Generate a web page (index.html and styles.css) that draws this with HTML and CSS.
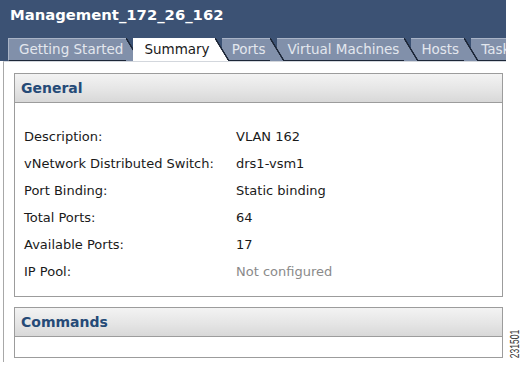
FILE: index.html
```html
<!DOCTYPE html>
<html lang="en">
  <head>
    <meta charset="UTF-8" />
    <title>Management_172_26_162</title>
    <link rel="stylesheet" href="styles.css">
  </head>
  <body>
    <div class="window">
      <div class="header">
        <div class="title">Management_172_26_162</div>
        <div class="tabs">
          <div class="tab">Getting Started</div>
          <div class="tab active">Summary</div>
          <div class="tab">Ports</div>
          <div class="tab">Virtual Machines</div>
          <div class="tab">Hosts</div>
          <div class="tab">Tasks &amp; Events</div>
        </div>
      </div>

      <div class="content">
        <div class="panel">
          <div class="panel-header">General</div>
          <div class="panel-body">
            <div class="row"><span class="label">Description:</span><span class="value">VLAN 162</span></div>
            <div class="row"><span class="label">vNetwork Distributed Switch:</span><span class="value">drs1-vsm1</span></div>
            <div class="row"><span class="label">Port Binding:</span><span class="value">Static binding</span></div>
            <div class="row"><span class="label">Total Ports:</span><span class="value">64</span></div>
            <div class="row"><span class="label">Available Ports:</span><span class="value">17</span></div>
            <div class="row"><span class="label">IP Pool:</span><span class="value muted">Not configured</span></div>
          </div>
        </div>

        <!-- Commands -->
        <div class="panel commands">
          <div class="panel-header">Commands</div>
          <div class="panel-body"></div>
        </div>
      </div>
    </div>

    <div class="figure-id">231501</div>
  </body>
</html>
```

FILE: styles.css
```css
* {
  margin: 0;
  padding: 0;
  box-sizing: border-box;
}

body {
  width: 521px;
  height: 368px;
  background: #fff;
  font-family: 'DejaVu Sans', Verdana, sans-serif;
  font-size: 13px;
  color: #1a1a1a;
  position: relative;
  overflow: hidden;
}

.window {
  width: 506px;
}

.header {
  height: 61px;
  background: #3c5274;
  display: flex;
  flex-direction: column;
  justify-content: space-between;
  overflow: hidden;
}

.title {
  padding: 6px 0 0 10px;
  font-weight: bold;
  font-size: 14.8px;
  line-height: 18px;
  color: #fff;
}

.tabs {
  display: flex;
  padding-left: 8px;
}

.tab {
  position: relative;
  flex-shrink: 0;
  height: 23px;
  line-height: 21px;
  padding: 0 5px 0 10px;
  margin-right: 7px;
  font-size: 13.5px;
  color: #e3e7ee;
  background: #8190aa;
  border-top: 1px solid #a9b4c7;
  border-bottom: 1px solid #1d2738;
}

.tab:first-child {
  border-left: 1px solid #a9b4c7;
  padding-right: 3px;
}

.tab::after {
  content: "";
  position: absolute;
  top: -1px;
  bottom: -1px;
  right: -14px;
  width: 14px;
  background: linear-gradient(to top right, #8190aa calc(50% - 1px), #1d2738 calc(50% - 0.5px), #1d2738 calc(50% + 0.5px), transparent calc(50% + 1px));
}

.tab:nth-child(1) { z-index: 6; }
.tab:nth-child(3) { z-index: 4; }
.tab:nth-child(4) { z-index: 3; }
.tab:nth-child(5) { z-index: 2; }
.tab:nth-child(6) { z-index: 1; }

.tab.active {
  z-index: 10;
  background: #fff;
  color: #1a1a1a;
  border-top-color: #fff;
  border-bottom-color: #fff;
  padding-left: 11px;
}

.tab.active::after {
  background: linear-gradient(to top right, #fff calc(50% - 1px), #1d2738 calc(50% - 0.5px), #1d2738 calc(50% + 0.5px), transparent calc(50% + 1px));
}

.content {
  margin-left: 3px;
  height: 301px;
  border-top: 1px solid #d3d7dd;
  border-left: 1px solid #a8a8a8;
  padding: 11px 3px 0 10px;
}

.panel {
  border: 1px solid #9c9c9c;
}

.panel-header {
  height: 29px;
  line-height: 28px;
  padding-left: 6px;
  border-bottom: 1px solid #9c9c9c;
  background: linear-gradient(180deg, #f3f3f3 0%, #e4e4e4 60%, #d8d8d8 100%);
  font-weight: bold;
  font-size: 14px;
  color: #254a77;
}

.panel-body {
  padding: 20px 0 11px 9px;
  background: #fff;
}

.row {
  display: flex;
  height: 27px;
  line-height: 27px;
}

.label {
  width: 212px;
  flex-shrink: 0;
}

.value {
  color: #1a1a1a;
}

.value.muted {
  color: #8a8a8a;
}

.commands {
  margin-top: 10px;
}

.commands .panel-body {
  height: 20px;
  padding: 0;
}

/* id da figura, na margem direita */
.figure-id {
  position: absolute;
  left: 497px;
  top: 339px;
  width: 36px;
  font-family: 'Liberation Sans', Arial, sans-serif;
  font-size: 8.5px;
  line-height: 10px;
  text-align: center;
  color: #333;
  transform: rotate(-90deg) scaleY(1.4);
}
```
